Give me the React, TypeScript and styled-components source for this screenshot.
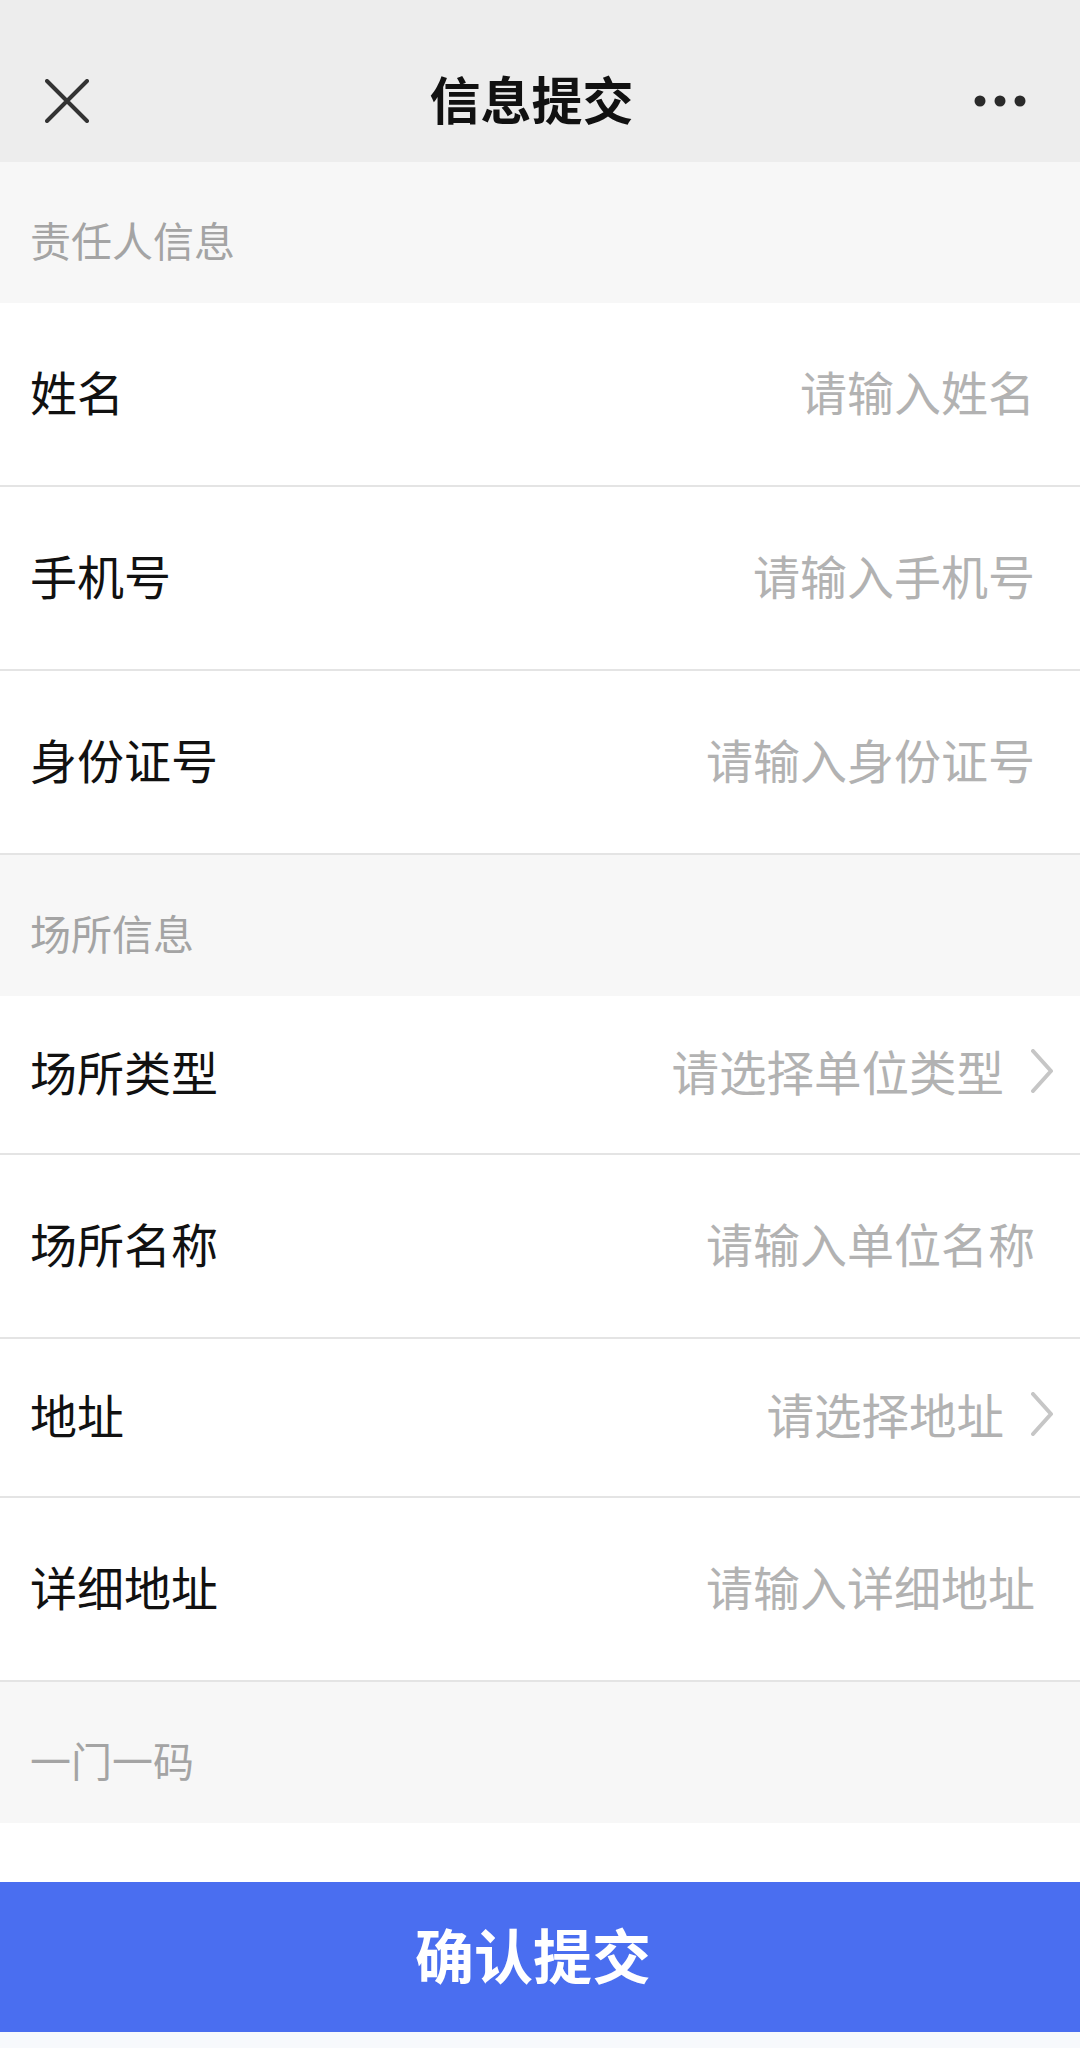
import React from "react";
import styled, { createGlobalStyle } from "styled-components";

const GlobalStyle = createGlobalStyle`
  html, body {
    margin: 0;
    padding: 0;
    background: #ffffff;
  }
  body {
    font-family: "Noto Sans CJK SC", "Noto Sans", "Liberation Sans", sans-serif;
    -webkit-font-smoothing: antialiased;
  }
  * { box-sizing: border-box; }
`;

const Page = styled.div`
  width: 1080px;
  min-height: 2048px;
  display: flex;
  flex-direction: column;
  background: #ffffff;
`;

const NavBar = styled.header`
  height: 162px;
  padding: 34px 54px 0 45px;
  background: #ededed;
  display: grid;
  grid-template-columns: 1fr auto 1fr;
  align-items: center;
`;

const NavLeft = styled.div`
  display: flex;
  align-items: center;
  justify-content: flex-start;
  padding-top: 6px;
`;

const NavRight = styled.div`
  display: flex;
  align-items: center;
  justify-content: flex-end;
  padding-top: 6px;
`;

const Title = styled.h1`
  margin: 0 8px 0 0;
  font-size: 51px;
  font-weight: 700;
  color: #111111;
  line-height: 1;
  letter-spacing: 0;
`;

const SectionHeader = styled.div`
  height: 141px;
  padding: 12px 30px 0;
  background: #f7f7f7;
  display: flex;
  align-items: center;
  font-size: 41px;
  color: #a4a4a4;
`;

const Row = styled.label<{ $compact?: boolean }>`
  height: ${(p) => (p.$compact ? "159px" : "184px")};
  padding: 0 27px 8px 30px;
  display: flex;
  align-items: center;
  background: #ffffff;
  border-bottom: 2px solid #e4e4e4;
`;

const RowLabel = styled.span`
  font-size: 47px;
  color: #111111;
  white-space: nowrap;
`;

const Input = styled.input`
  flex: 1;
  min-width: 0;
  border: none;
  outline: none;
  background: transparent;
  padding: 0 18px 0 0;
  font-family: inherit;
  font-size: 47px;
  color: #111111;
  text-align: right;
  &::placeholder {
    color: #b2b2b2;
  }
`;

const Picker = styled.div`
  flex: 1;
  display: flex;
  align-items: center;
  justify-content: flex-end;
  gap: 27px;
`;

const PickerText = styled.span`
  font-size: 47.5px;
  color: #b2b2b2;
  white-space: nowrap;
`;

const ButtonArea = styled.div`
  padding-top: 59px;
  background: #ffffff;
`;

const SubmitButton = styled.button`
  width: 100%;
  height: 150px;
  border: none;
  padding: 0 14px 8px 0;
  background: #4a6ef0;
  color: #ffffff;
  font-family: inherit;
  font-size: 59px;
  font-weight: 700;
  display: flex;
  align-items: center;
  justify-content: center;
  cursor: pointer;
`;

const BottomStrip = styled.div`
  flex: 1;
  background: #f7f9fc;
`;

const CloseIcon = () => (
  <svg width="44" height="44" viewBox="0 0 44 44">
    <path d="M2 2 L42 42 M42 2 L2 42" stroke="#333333" strokeWidth="4" strokeLinecap="round" />
  </svg>
);

const MoreIcon = () => (
  <svg width="52" height="14" viewBox="0 0 52 14">
    <circle cx="6" cy="7" r="5.5" fill="#2a2a2a" />
    <circle cx="26" cy="7" r="5.5" fill="#2a2a2a" />
    <circle cx="46" cy="7" r="5.5" fill="#2a2a2a" />
  </svg>
);

const Chevron = () => (
  <svg width="22" height="44" viewBox="0 0 22 44">
    <polyline points="2,2 20,22 2,42" fill="none" stroke="#c6c6c6" strokeWidth="4" strokeLinecap="round" strokeLinejoin="round" />
  </svg>
);

type Field = { kind: "input" | "picker"; label: string; placeholder: string };

const sections: { title: string; fields: Field[] }[] = [
  {
    title: "责任人信息",
    fields: [
      { kind: "input", label: "姓名", placeholder: "请输入姓名" },
      { kind: "input", label: "手机号", placeholder: "请输入手机号" },
      { kind: "input", label: "身份证号", placeholder: "请输入身份证号" },
    ],
  },
  {
    title: "场所信息",
    fields: [
      { kind: "picker", label: "场所类型", placeholder: "请选择单位类型" },
      { kind: "input", label: "场所名称", placeholder: "请输入单位名称" },
      { kind: "picker", label: "地址", placeholder: "请选择地址" },
      { kind: "input", label: "详细地址", placeholder: "请输入详细地址" },
    ],
  },
  { title: "一门一码", fields: [] },
];

export default function App() {
  return (
    <>
      <GlobalStyle />
      <Page>
        <NavBar>
          <NavLeft>
            <CloseIcon />
          </NavLeft>
          <Title>信息提交</Title>
          <NavRight>
            <MoreIcon />
          </NavRight>
        </NavBar>
        {sections.map((s) => (
          <React.Fragment key={s.title}>
            <SectionHeader>{s.title}</SectionHeader>
            {s.fields.map((f) =>
              f.kind === "input" ? (
                <Row key={f.label}>
                  <RowLabel>{f.label}</RowLabel>
                  <Input placeholder={f.placeholder} />
                </Row>
              ) : (
                <Row key={f.label} $compact>
                  <RowLabel>{f.label}</RowLabel>
                  <Picker>
                    <PickerText>{f.placeholder}</PickerText>
                    <Chevron />
                  </Picker>
                </Row>
              )
            )}
          </React.Fragment>
        ))}
        <ButtonArea>
          <SubmitButton>确认提交</SubmitButton>
        </ButtonArea>
        <BottomStrip />
      </Page>
    </>
  );
}
